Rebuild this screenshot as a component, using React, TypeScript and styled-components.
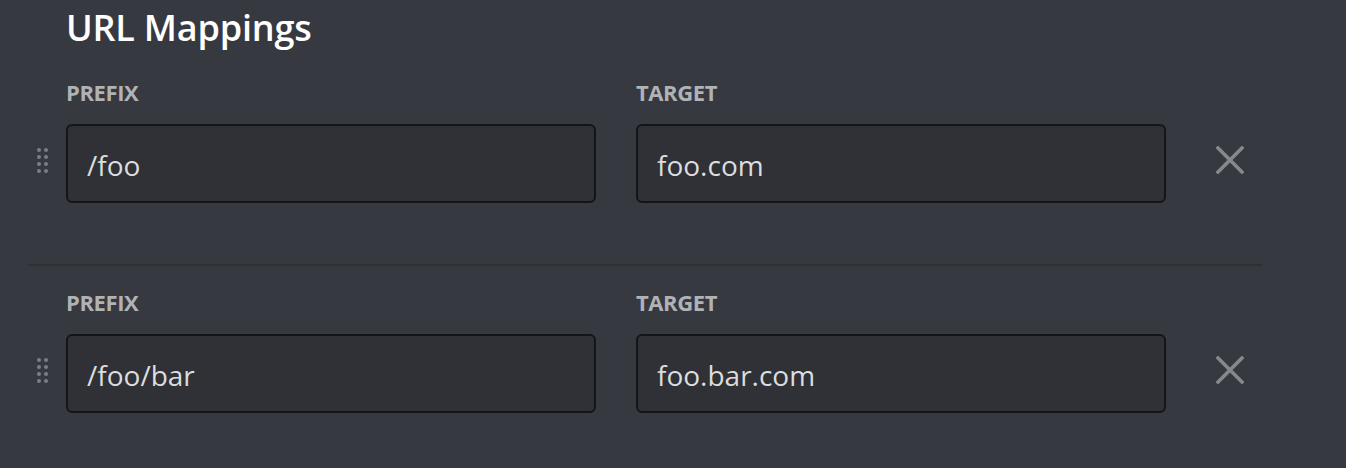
import React from "react";
import styled, { createGlobalStyle } from "styled-components";

const Global = createGlobalStyle`
  html, body {
    margin: 0;
    padding: 0;
    background: #36393f;
  }
  body {
    font-family: "Open Sans", "Noto Sans", "Liberation Sans", sans-serif;
    -webkit-font-smoothing: antialiased;
  }
`;

const Page = styled.div`
  width: 1346px;
  height: 468px;
  background: #36393f;
  padding: 6px 0 0 28px;
  box-sizing: border-box;
  overflow: hidden;
`;

const Title = styled.h2`
  margin: 0 0 0 38px;
  font-size: 36px;
  line-height: 44px;
  font-weight: 600;
  color: #ffffff;
  letter-spacing: -0.2px;
`;

const List = styled.div`
  width: 1234px;
  margin-top: 30px;
`;

const Section = styled.div<{ $first?: boolean; $last?: boolean }>`
  display: grid;
  grid-template-columns: 38px 530px 40px 530px 1fr;
  grid-template-areas:
    ". plabel . tlabel ."
    "handle pinput . tinput remove";
  padding: ${(p) => (p.$first ? "0" : "24px")} 0 ${(p) => (p.$last ? "0" : "61px")};
  border-bottom: ${(p) => (p.$last ? "none" : "2px solid #2e3035")};
`;

const Label = styled.div<{ $area: string }>`
  grid-area: ${(p) => p.$area};
  font-size: 22px;
  line-height: 24px;
  font-weight: 700;
  text-transform: uppercase;
  color: #b0b2b5;
  margin-bottom: 20px;
  letter-spacing: -0.4px;
`;

const Input = styled.input<{ $area: string }>`
  grid-area: ${(p) => p.$area};
  box-sizing: border-box;
  width: 530px;
  height: 79px;
  margin: 0;
  padding: 2px 19px 0;
  background: #2f3136;
  border: 2px solid #141518;
  border-radius: 6px;
  color: #dcddde;
  font-family: "Open Sans", "Noto Sans", "Liberation Sans", sans-serif;
  font-size: 28px;
  outline: none;
`;

const Handle = styled.div`
  grid-area: handle;
  align-self: center;
  padding-left: 9px;
  margin-bottom: 6px;
  display: flex;
  color: #7b7f85;
`;

const RemoveButton = styled.button`
  grid-area: remove;
  align-self: center;
  justify-self: start;
  margin: 0 0 8px 50px;
  padding: 0;
  width: 28px;
  height: 28px;
  border: none;
  background: transparent;
  color: #85888d;
  display: flex;
  cursor: pointer;
`;

const DragDots = () => (
  <svg width="12" height="25" viewBox="0 0 12 25" fill="currentColor">
    {[2, 9, 16, 23].map((y) =>
      [2, 9].map((x) => <circle key={`${x}-${y}`} cx={x} cy={y} r={2} />)
    )}
  </svg>
);

const CloseIcon = () => (
  <svg width="28" height="28" viewBox="0 0 28 28">
    <path
      d="M2 2 L26 26 M26 2 L2 26"
      stroke="currentColor"
      strokeWidth="3.6"
      strokeLinecap="square"
      fill="none"
    />
  </svg>
);

const mappings = [
  { prefix: "/foo", target: "foo.com" },
  { prefix: "/foo/bar", target: "foo.bar.com" },
];

export default function App() {
  return (
    <>
      <Global />
      <Page>
        <Title>URL Mappings</Title>
        <List>
          {mappings.map((m, i) => (
            <Section
              key={i}
              $first={i === 0}
              $last={i === mappings.length - 1}
            >
              <Label $area="plabel">Prefix</Label>
              <Label $area="tlabel">Target</Label>
              <Handle>
                <DragDots />
              </Handle>
              <Input $area="pinput" value={m.prefix} readOnly />
              <Input $area="tinput" value={m.target} readOnly />
              <RemoveButton aria-label="Remove">
                <CloseIcon />
              </RemoveButton>
            </Section>
          ))}
        </List>
      </Page>
    </>
  );
}
